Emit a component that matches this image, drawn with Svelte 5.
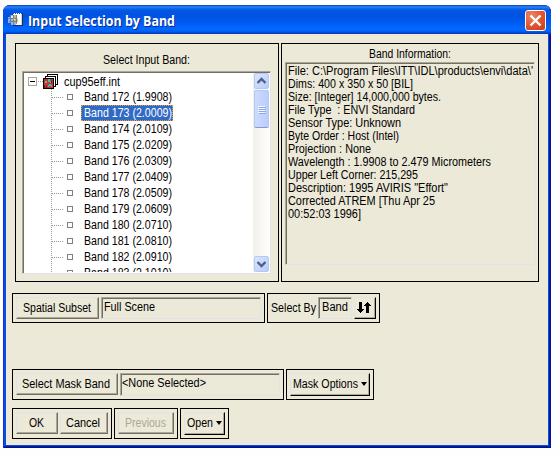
<script>
  const bands = [
    'Band 172 (1.9908)', 'Band 173 (2.0009)', 'Band 174 (2.0109)', 'Band 175 (2.0209)',
    'Band 176 (2.0309)', 'Band 177 (2.0409)', 'Band 178 (2.0509)', 'Band 179 (2.0609)',
    'Band 180 (2.0710)', 'Band 181 (2.0810)', 'Band 182 (2.0910)', 'Band 183 (2.1010)'
  ];
  let selected = $state(1);

  // Each line carries its width in the dialog's narrow system face.
  const info = [
    ["File: C:\\Program Files\\ITT\\IDL\\products\\envi\\data\\'", 245],
    ['Dims: 400 x 350 x 50 [BIL]', 125],
    ['Size: [Integer] 14,000,000 bytes.', 153],
    ['File Type\u00a0 : ENVI Standard', 127],
    ['Sensor Type: Unknown', 113],
    ['Byte Order : Host (Intel)', 111],
    ['Projection : None', 83],
    ['Wavelength : 1.9908 to 2.479 Micrometers', 203],
    ['Upper Left Corner: 215,295', 130],
    ['Description: 1995 AVIRIS "Effort"', 160],
    ['Corrected ATREM [Thu Apr 25', 147],
    ['00:52:03 1996]', 73]
  ];
</script>

{#snippet label(text, width)}
  <svg class="label" {width} height="13"><text x="0" y="11" textLength={width} lengthAdjust="spacingAndGlyphs">{text}</text></svg>
{/snippet}

{#snippet arrow(down)}
  <svg width="15" height="16" viewBox="0 0 15 16">
    <path d={down ? 'M3.5 6l4 4 4-4' : 'M3.5 10l4-4 4 4'} fill="none" stroke="#4d6185" stroke-width="2.4" />
  </svg>
{/snippet}

<div class="page">
  <div class="window">
    <header>
      <svg class="app" width="16" height="16" viewBox="0 0 16 16" shape-rendering="crispEdges">
        <path fill="#fff" d="M5 2h9v11H5z" />
        <path fill="#fff" d="M6 1h1v1H6zM8 1h1v1H8zM10 1h1v1h-1zM12 1h1v1h-1z" />
        <path fill="#1a2c6a" d="M14 1h1v13h-1zM5 13h10v1H5z" />
        <path fill="#d8d4c4" d="M13 2h1v11h-1z" />
        <path fill="#9db4dc" d="M2 3h7v8H8v2H3v-2H0V5h2z" />
        <path fill="#e9b93b" d="M6 3h3v2H6zM7 7h3v3H7zM4 9h2v2H4z" />
        <path fill="#f5f0c0" d="M3 4h2v2H3zM5 6h2v2H5z" />
        <path fill="#3a5a9c" d="M2 3h1v9H2zM5 3h1v10H5zM8 3h1v9H8zM0 6h9v1H0zM1 9h8v1H1z" opacity=".6" />
      </svg>
      <svg class="title" width="150" height="20"><text x="0" y="15" textLength="147" lengthAdjust="spacingAndGlyphs">Input Selection by Band</text></svg>
      <button class="close" aria-label="Close">
        <svg width="19" height="19" viewBox="0 0 19 19"><path d="M4.500 4.500l10 10M14.500 4.500l-10 10" stroke="#fff" stroke-width="2.400" /></svg>
      </button>
    </header>

    <main>
      <div class="row top">
        <section class="frame bandpanel">
          <div class="heading first">{@render label('Select Input Band:', 87)}</div>
          <div class="sunken list">
            <div class="tree">
              <div class="item root">
                <svg width="30" height="16" viewBox="0 0 30 16" shape-rendering="crispEdges">
                  <path d="M.5 4.500h8v8h-8z" fill="#fff" stroke="#aca899" />
                  <path d="M2 8h5v1H2z" fill="#000" />
                  <path d="M10 8.500h5" stroke="#999" stroke-dasharray="1 1" />
                  <path d="M19.500 1.500h10v10h-10z" fill="#fff" stroke="#000" />
                  <path d="M17.500 3.500h10v10h-10z" fill="#fff" stroke="#000" />
                  <path d="M15.500 5.500h10v10h-10z" fill="#d02f28" stroke="#000" />
                  <path d="M20 6h2v2h2v2h-2V9h-2zM17 8h2v2h-2zM21 11h2v2h-2v1h-1v-2h1zM23 12h1v2h-1z" fill="#35c5bb" />
                  <path d="M16 12h1v3h-1zM23 8h1v2h-1zM18 13h1v2h-1z" fill="#57201d" />
                </svg>
                {@render label('cup95eff.int', 56)}
              </div>
              {#each bands as band, i}
                <div class="item" onclick={() => (selected = i)} role="presentation">
                  <svg width="24" height="16" viewBox="0 0 24 16" shape-rendering="crispEdges">
                    <path d="M.5 0v16M1 8.500h11" fill="none" stroke="#999" stroke-dasharray="1 1" />
                    <path d="M16.500 5.500h5v5h-5z" fill="#fff" stroke="#808080" />
                  </svg>
                  <span class="name" class:selected={i === selected}>{@render label(band, 88)}</span>
                </div>
              {/each}
            </div>
            <div class="scrollbar">
              <div class="sb">{@render arrow(false)}</div>
              <div class="sb thumb"><i></i><i></i><i></i><i></i></div>
              <div class="sb down">{@render arrow(true)}</div>
            </div>
          </div>
        </section>

        <section class="frame infopanel">
          <div class="heading">{@render label('Band Information:', 82)}</div>
          <div class="sunken info">
            {#each info as [text, width]}
              <div class="line">{@render label(text, width)}</div>
            {/each}
          </div>
        </section>
      </div>

      <div class="row subset">
        <div class="frame bar">
          <button style:width="83px">{@render label('Spatial Subset', 68)}</button>
          <div class="sunken field" style:width="160px">{@render label('Full Scene', 51)}</div>
        </div>
        <div class="frame bar by">
          <span class="caption">{@render label('Select By', 45)}</span>
          <div class="sunken field" style:width="34px">{@render label('Band', 26)}</div>
          <button class="menu" style:width="22px" aria-label="Toggle">
            <svg width="14" height="12" viewBox="0 0 14 12" shape-rendering="crispEdges">
              <path d="M2 0h3v7h2v1H6v1H5v1H4v1H3v-1H2V9H1V8H0V7h2zM9 11h3V4h2V3h-1V2h-1V1h-1V0h-1v1H9v1H8v1H7v1h2z" />
            </svg>
          </button>
        </div>
      </div>

      <div class="row mask">
        <div class="frame bar">
          <button style:width="102px">{@render label('Select Mask Band', 88)}</button>
          <div class="sunken field" style:width="160px">{@render label('<None Selected>', 84)}</div>
        </div>
        <div class="frame bar">
          <button class="menu drop" style:width="80px">{@render label('Mask Options', 65)}<b class="tri"></b></button>
        </div>
      </div>

      <div class="row actions">
        <div class="frame bar">
          <button style:width="42px">{@render label('OK', 15)}</button>
          <button style:width="48px">{@render label('Cancel', 34)}</button>
        </div>
        <div class="frame bar">
          <button disabled style:width="56px">{@render label('Previous', 41)}</button>
        </div>
        <div class="frame bar">
          <button class="menu drop" style:width="41px">{@render label('Open', 26)}<b class="tri"></b></button>
        </div>
      </div>
    </main>
  </div>
</div>

<style>
  :global(body) { background: #fff; }
  * { box-sizing: border-box; }
  .page {
    width: 558px; height: 454px; padding: 5px 7px 6px 3px; background: #fefefe;
    font: 12px "Liberation Sans", Arial, sans-serif; color: #000;
  }
  svg { display: block; flex: none; }
  .label { overflow: visible; fill: currentColor; }
  .window {
    width: 548px; height: 443px; display: flex; flex-direction: column;
    border-radius: 7px 7px 0 0; overflow: hidden;
    background: linear-gradient(#0831d9, #0831d9 29px, #0a4be0 30px, #0a4be0);
    box-shadow: inset 1px 0 #0831d9, inset -1px -1px #00138c, inset -2px -2px #001ea0;
  }
  header {
    height: 29px; flex: none; display: flex; align-items: center; padding: 2px 5px 0 5px;
    background: linear-gradient(#0841c0 0, #2a86f5 2px, #1b6ff0 3px, #0358e6 5px, #0052df 10px, #005bf0 18px, #0068ff 23px, #0064fa 26px, #0046c8 28px, #0038b8 29px);
  }
  .app { margin-bottom: 1px; }
  .title { overflow: visible; margin: 0 auto 0 4px; font: bold 13.5px "Open Sans", "Noto Sans", sans-serif; fill: #fff; text-shadow: 1px 1px #0b2a8a; }
  header .close {
    width: 21px; height: 21px; padding: 0; border: 1px solid #fff; border-radius: 3px;
    background: radial-gradient(circle at 30% 25%, #ec8a68, #e3552f 50%, #cc3d16);
  }
  main {
    flex: 1; margin: 0 3px 3px; padding: 9px 9px 6px 6px; background: #ece9d8;
    display: flex; flex-direction: column;
  }
  .row { display: flex; gap: 2px; flex: none; }
  .frame { border: 1px solid #000; }
  .sunken {
    border: 1px solid; border-color: #aca899 #e3e3e6 #e3e3e6 #aca899; padding: 1px;
    box-shadow: inset 1px 1px #716f64;
  }
  .top { margin-left: 3px; height: 239px; }
  .bandpanel { width: 264px; padding: 0 7px 0 6px; }
  .infopanel { width: 258px; padding: 0 3px; }
  .heading { display: flex; justify-content: center; padding: 3px 0 2px; }
  .heading.first { padding: 9px 0 5px; }
  .list { height: 203px; display: flex; background: #fff; overflow: hidden; }
  .tree { width: 229px; height: 199px; overflow: hidden; }
  .item { height: 16px; display: flex; align-items: center; padding-left: 27px; }
  .root { padding-left: 4px; gap: 6px; }
  .name { display: flex; height: 16px; padding: 1px 1px 2px 2px; margin-left: 6px; border: 1px solid transparent; border-width: 0 1px; width: 92px; }
  .selected { background: #316ac5; color: #fff; outline: 1px dotted #e0a040; outline-offset: -1px; }
  .scrollbar { width: 16px; height: 199px; background: linear-gradient(90deg, #f1f0ea, #fefefb); display: flex; flex-direction: column; align-items: center; }
  .sb { width: 15px; height: 16px; flex: none; border: 1px solid #b3c8f5; border-radius: 2px; background: linear-gradient(135deg, #dbe5ff, #b9cbf8); display: flex; align-items: center; justify-content: center; }
  .thumb { height: 38px; margin-top: 1px; flex-direction: column; gap: 1px; background: linear-gradient(90deg, #ccdafe, #bccdfa); border-bottom-color: #7d9ccf; }
  .thumb i { width: 7px; height: 1px; background: #f2f6ff; box-shadow: 1px 1px #8caae6; }
  .down { margin-top: auto; }
  .info { height: 203px; overflow: hidden; padding: 1px 0 0 2px; }
  .line { height: 13px; }
  .bar { display: flex; gap: 2px; padding: 3px; }
  .subset { margin-top: 11px; height: 30px; }
  .mask { margin-top: 46px; height: 31px; }
  .actions { margin-top: 8px; height: 31px; }
  .field { padding: 2px 0 0 2px; height: 22px; overflow: hidden; }
  .mask .field { height: 23px; padding-left: 1px; }
  .by .field { padding-left: 3px; }
  .caption { padding: 4px 0 0; width: 45px; }
  main button {
    font: inherit; color: #000; background: #ece9d8; height: 22px; padding: 0 2px 1px 0; margin: 0;
    display: flex; align-items: center; justify-content: center;
    border: 1px solid; border-color: #e3e3e6 #716f64 #716f64 #e3e3e6;
    box-shadow: inset -1px -1px #aca899;
  }
  main button:disabled { color: #aca899; }
  main button.menu { border-right-color: #000; border-bottom-color: #000; }
  main button.drop { height: 23px; gap: 3px; padding: 0 0 2px; }
  .tri { border: solid transparent; border-width: 4px 3.5px 0; border-top-color: #000; }
</style>
